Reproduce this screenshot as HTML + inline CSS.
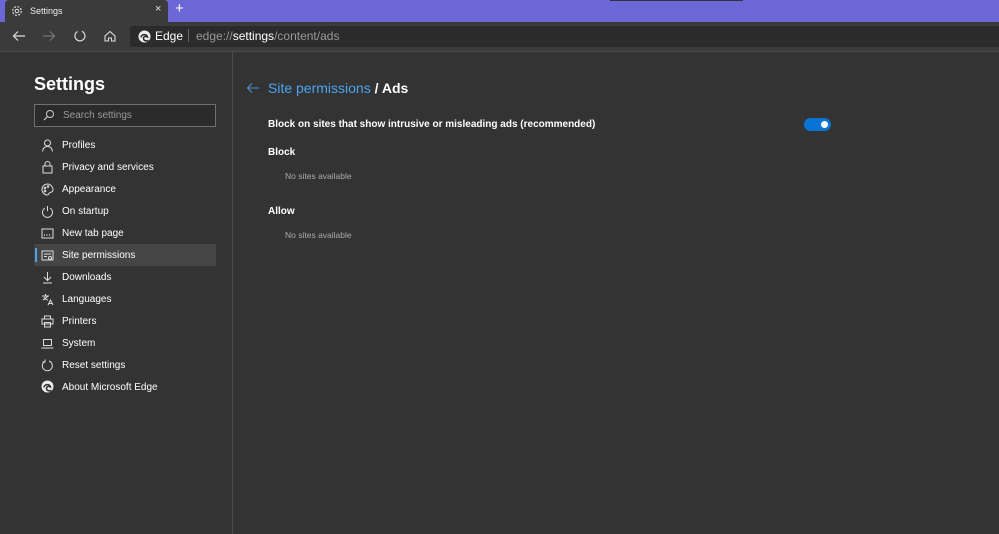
<!DOCTYPE html>
<html><head><style>
*{margin:0;padding:0;box-sizing:border-box}
body{width:999px;height:534px;overflow:hidden;background:#333;font-family:"Liberation Sans",sans-serif;color:#fff;position:relative}
.abs{position:absolute}
.top{left:0;top:0;width:999px;height:22px;background:#6b67d6}
.tab{left:5px;top:0;width:163px;height:22px;background:#3b3b3b;border-radius:4px 4px 0 0}
.tb{left:0;top:22px;width:999px;height:29px;background:#3b3b3b}
.addr{left:130px;top:26px;width:869px;height:21px;background:#2b2b2b;border-radius:3px 0 0 3px}
.line{left:0;top:51px;width:999px;height:1px;background:#4a4a4a}
.div{left:232px;top:52px;width:1px;height:482px;background:#4a4a4a}
.nav{left:62px;font-size:10px;color:#fff}
svg{position:absolute}
</style></head><body>
<div class="abs top"></div>
<div class="abs" style="left:610px;top:0;width:133px;height:1px;background:#333"></div>
<div class="abs tab"></div>
<svg style="left:11px;top:5px" width="12" height="12" viewBox="0 0 12 12"><circle cx="6" cy="6" r="4.3" fill="none" stroke="#ddd" stroke-width="1.2" stroke-dasharray="2 1.4"/><circle cx="6" cy="6" r="1.8" fill="none" stroke="#ddd"/></svg>
<div class="abs" style="left:30px;top:6px;font-size:9px;color:#eee">Settings</div>
<div class="abs" style="left:155px;top:3px;font-size:11px;color:#ddd">×</div>
<div class="abs" style="left:175px;top:0px;font-size:15px;color:#fff">+</div>
<div class="abs tb"></div>
<div class="abs addr"></div>
<div class="abs line"></div>
<svg style="left:12px;top:30px" width="14" height="12" viewBox="0 0 14 12"><path d="M13 6H2M6 1.5L1.5 6 6 10.5" stroke="#ddd" fill="none" stroke-width="1.2"/></svg>
<svg style="left:42px;top:30px" width="14" height="12" viewBox="0 0 14 12"><path d="M1 6H12M8 1.5L12.5 6 8 10.5" stroke="#777" fill="none" stroke-width="1.2"/></svg>
<svg style="left:73px;top:29px" width="14" height="14" viewBox="0 0 14 14"><path d="M4.5 2.5A5 5 0 1 0 9 2.3" stroke="#ddd" fill="none" stroke-width="1.2"/></svg>
<svg style="left:103px;top:29px" width="14" height="14" viewBox="0 0 14 14"><path d="M2 7L7 2.5 12 7V12H8.5V9H5.5V12H2Z" stroke="#ddd" fill="none" stroke-width="1.1"/></svg>
<svg style="left:138px;top:30px" width="13" height="13" viewBox="0 0 13 13"><circle cx="6.5" cy="6.5" r="6" fill="#eee"/><path d="M3 7.5C3 4 9 3.5 9.5 7c-1.5-1-4-1-4 1.5 0 2 2.5 3 5 2" stroke="#2b2b2b" fill="none" stroke-width="1.5"/></svg>
<div class="abs" style="left:155px;top:29px;font-size:12px;color:#fff">Edge</div>
<div class="abs" style="left:188px;top:29px;width:1px;height:13px;background:#666"></div>
<div class="abs" style="left:196px;top:29px;font-size:12px;color:#999">edge://<span style="color:#fff">settings</span>/content/ads</div>
<div class="abs div"></div>
<div class="abs" style="left:34px;top:74px;font-size:18px;font-weight:bold">Settings</div>
<div class="abs" style="left:34px;top:104px;width:182px;height:23px;border:1px solid #707070;background:#2b2b2b"></div>
<svg style="left:43px;top:109px" width="12" height="12" viewBox="0 0 12 12"><circle cx="7" cy="5" r="3.5" stroke="#ccc" fill="none"/><path d="M4.5 7.5L1 11" stroke="#ccc" stroke-width="1.2"/></svg>
<div class="abs" style="left:63px;top:110px;font-size:10px;color:#999">Search settings</div>
<div class="abs" style="left:34px;top:244px;width:182px;height:22px;background:#454545"></div>
<div class="abs" style="left:35px;top:248px;width:2px;height:14px;background:#4aa3ef"></div>
<div class="abs nav" style="top:140px">Profiles</div>
<div class="abs nav" style="top:162px">Privacy and services</div>
<div class="abs nav" style="top:184px">Appearance</div>
<div class="abs nav" style="top:206px">On startup</div>
<div class="abs nav" style="top:228px">New tab page</div>
<div class="abs nav" style="top:250px">Site permissions</div>
<div class="abs nav" style="top:272px">Downloads</div>
<div class="abs nav" style="top:294px">Languages</div>
<div class="abs nav" style="top:316px">Printers</div>
<div class="abs nav" style="top:338px">System</div>
<div class="abs nav" style="top:360px">Reset settings</div>
<div class="abs nav" style="top:382px">About Microsoft Edge</div>
<svg style="left:41px;top:139px" width="13" height="13" viewBox="0 0 13 13" fill="none" stroke="#ddd"><circle cx="6.5" cy="4" r="3"/><path d="M1.5 12.5C2 9 4 7.5 6.5 7.5S11 9 11.5 12.5"/></svg>
<svg style="left:41px;top:160px" width="13" height="14" viewBox="0 0 13 14" fill="none" stroke="#ddd"><rect x="2" y="6" width="9" height="7"/><path d="M4 6V4a2.5 2.5 0 0 1 5 0v2"/></svg>
<svg style="left:41px;top:183px" width="13" height="13" viewBox="0 0 13 13" fill="none" stroke="#ddd"><path d="M6.5 1a5.5 5.5 0 1 0 0 11c1.5 0 1-2 2.5-2.5S12 9 12 6.5 9.5 1 6.5 1Z"/><circle cx="4" cy="5" r=".8"/><circle cx="7" cy="3.5" r=".8"/><circle cx="4" cy="8" r=".8"/></svg>
<svg style="left:41px;top:205px" width="13" height="13" viewBox="0 0 13 13" fill="none" stroke="#ddd"><path d="M4 3A5 5 0 1 0 9 3M6.5 1V6"/></svg>
<svg style="left:41px;top:227px" width="13" height="13" viewBox="0 0 13 13" fill="none" stroke="#ddd"><rect x="1" y="2" width="11" height="9"/><path d="M3 8h1M5.5 8h1M8 8h1" stroke-width="1.4"/></svg>
<svg style="left:41px;top:249px" width="13" height="13" viewBox="0 0 13 13" fill="none" stroke="#ddd"><rect x="1" y="2" width="11" height="9"/><path d="M3 5h7M3 7.5h3"/><circle cx="9" cy="9" r="1.5"/></svg>
<svg style="left:41px;top:271px" width="13" height="13" viewBox="0 0 13 13" fill="none" stroke="#ddd"><path d="M6.5 1V9M3 6l3.5 3.5L10 6M2 12h9"/></svg>
<svg style="left:41px;top:293px" width="13" height="13" viewBox="0 0 13 13" fill="none" stroke="#ddd"><path d="M1 3h7M4.5 1v2M2 7c2-1 4-3 5-4M3 4c1 2 3 3 4 3M7 12l2.5-5 2.5 5M8 10.5h3"/></svg>
<svg style="left:41px;top:315px" width="13" height="13" viewBox="0 0 13 13" fill="none" stroke="#ddd"><rect x="3.5" y="1" width="6" height="3"/><rect x="1" y="4" width="11" height="5"/><rect x="3.5" y="7.5" width="6" height="4.5"/></svg>
<svg style="left:41px;top:337px" width="13" height="13" viewBox="0 0 13 13" fill="none" stroke="#ddd"><rect x="2.5" y="2.5" width="8" height="6"/><path d="M0.5 11h12"/></svg>
<svg style="left:41px;top:359px" width="13" height="13" viewBox="0 0 13 13" fill="none" stroke="#ddd"><path d="M4 2.3A5 5 0 1 0 8 2M4 0.5v2.5H1.5"/></svg>
<svg style="left:41px;top:380px" width="13" height="13" viewBox="0 0 13 13"><circle cx="6.5" cy="6.5" r="6" fill="#eee"/><path d="M3 7.5C3 4 9 3.5 9.5 7c-1.5-1-4-1-4 1.5 0 2 2.5 3 5 2" stroke="#333" fill="none" stroke-width="1.5"/></svg>
<svg style="left:246px;top:82px" width="14" height="12" viewBox="0 0 14 12"><path d="M13 6H2M6 1.5L1.5 6 6 10.5" stroke="#4a8fd0" fill="none" stroke-width="1.1"/></svg>
<div class="abs" style="left:268px;top:80px;font-size:14px;color:#4aa3ef">Site permissions <span style="color:#fff;font-weight:bold">/ Ads</span></div>
<div class="abs" style="left:268px;top:119px;font-size:10px;font-weight:bold">Block on sites that show intrusive or misleading ads (recommended)</div>
<div class="abs" style="left:804px;top:118px;width:27px;height:13px;border-radius:7px;background:#0a74d4"></div>
<div class="abs" style="left:821px;top:121px;width:7px;height:7px;border-radius:50%;background:#fff"></div>
<div class="abs" style="left:268px;top:147px;font-size:10px;font-weight:bold">Block</div>
<div class="abs" style="left:285px;top:171px;font-size:8.5px;color:#aaa">No sites available</div>
<div class="abs" style="left:268px;top:206px;font-size:10px;font-weight:bold">Allow</div>
<div class="abs" style="left:285px;top:230px;font-size:8.5px;color:#aaa">No sites available</div>
</body></html>
